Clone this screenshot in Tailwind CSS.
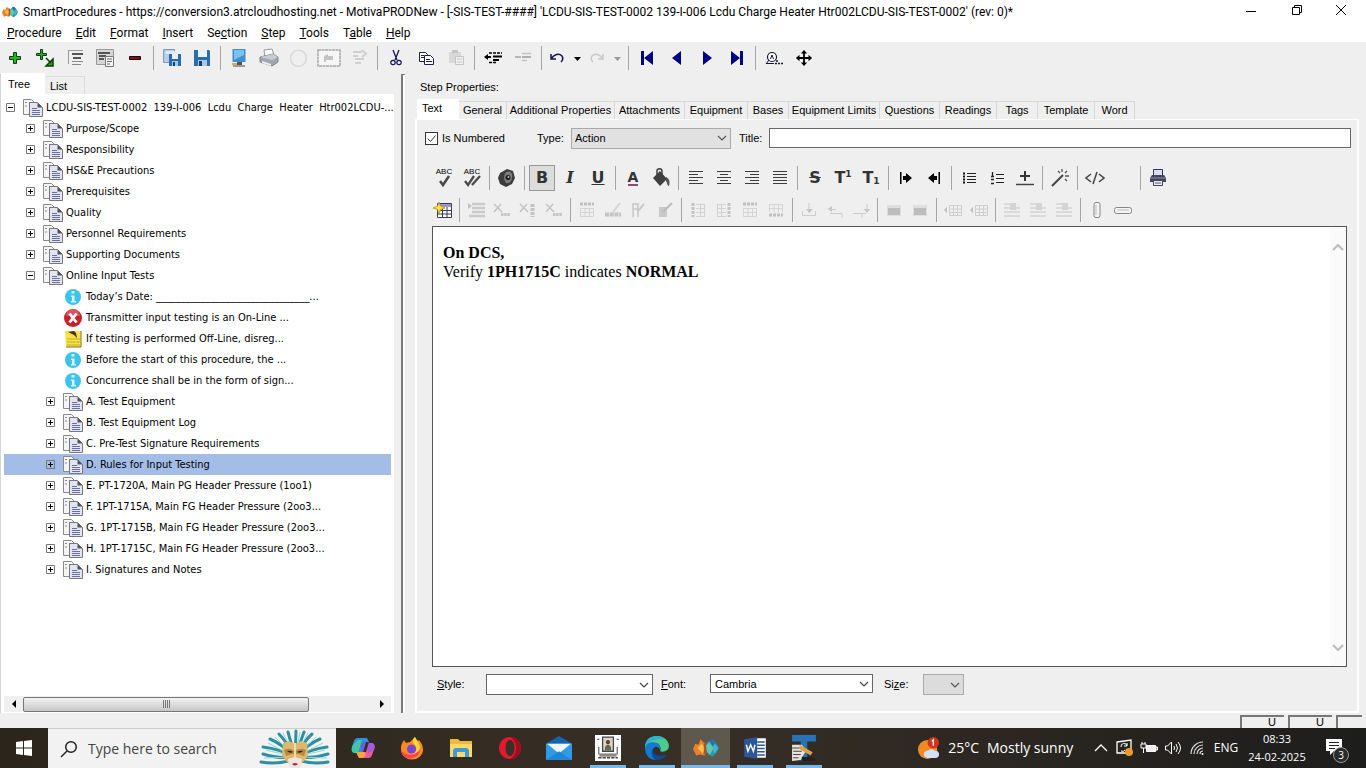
<!DOCTYPE html>
<html lang="en">
<head>
<meta charset="utf-8">
<meta name="viewport" content="width=device-width, initial-scale=1">
<title>SmartProcedures</title>
<script src="https://cdn.jsdelivr.net/npm/@tailwindcss/browser@4"></script>
</head>
<body class="h-screen overflow-hidden flex flex-col bg-[#efefef] text-black font-['Liberation_Sans',Arial,sans-serif] text-[11px] leading-4">

<svg class="hidden" aria-hidden="true">
  <defs>
    <symbol id="logo" viewBox="0 0 24 24"><path d="M0 13l2-5 3 1 2-5 4 4 2 5-2 6-5-1-3 1z" fill="#ee7f2b"/><path d="M4 12l4-4 3 4-2 5z" fill="#fbc04a"/><path d="M10 6l3 2v9l-3 1z" fill="#a9542e"/><path d="M24 12l-3-5-3-3-5 3-1 5 2 6 4 2 4-4z" fill="#259cae"/><path d="M12 10l3-3 4 5-3 6-3-2z" fill="#62c7ae"/><path d="M15 5l3-1 3 4-3 2z" fill="#2b6fa8"/><path d="M20 8l3 4-3 5-2-4z" fill="#49b4d0"/></symbol>
    <symbol id="plus" viewBox="0 0 20 20"><path d="M8.500 4.500h3v4h4v3h-4v4h-3v-4h-4v-3h4z" fill="#28b428" stroke="#0a3d0a"/></symbol>
    <symbol id="plusarrow" viewBox="0 0 20 20"><path d="M5.500 1.500h2v4h4v2h-4v4h-2v-4h-4v-2h4z" fill="#28b428" stroke="#0a3d0a"/><path d="M11 10l5 5M18 11v7h-7z" fill="#28a428" stroke="#0a3d0a" stroke-width="1.500"/></symbol>
    <symbol id="list1" viewBox="0 0 20 20"><path d="M3 2.500h15M3.500 2v14" fill="none" stroke="#9a9a9a"/><path d="M7 6h11M8 10h8" stroke="#555" stroke-width="2"/><path d="M7 13.500h11M7 16.500h9" stroke="#888"/></symbol>
    <symbol id="list2" viewBox="0 0 20 20"><path d="M1.500 1.500h17v15h-17z" fill="#d6d6d6" stroke="#999"/><path d="M3 5h12M4 8h7M4 11h5" stroke="#555" stroke-width="2"/><path d="M10.500 8.500h8v10h-8z" fill="#f4f4f4" stroke="#777"/><path d="M12 11h5M12 13.500h5M12 16h3" stroke="#666"/></symbol>
    <symbol id="minus" viewBox="0 0 20 20"><path d="M4.500 8.500h11v3h-11z" fill="#7a1020" stroke="#220008"/></symbol>
    <symbol id="save" viewBox="0 0 20 20"><path d="M2 2h15l1 1v15H2z" fill="#2a6cb0"/><path d="M6 2h9v7H6z" fill="#e8f1fa"/><path d="M6 12h9v6H6z" fill="#a9c8e6"/><path d="M7 13h3v5H7z" fill="#123f70"/></symbol>
    <symbol id="saveall" viewBox="0 0 20 20"><path d="M1.500 1.500h11v13h-11z" fill="#b9cdea" stroke="#7f98c4"/><path d="M4 3h10v3H4z" fill="#dfe9f8"/><path d="M7 6h12v12H7z" fill="#2a6cb0"/><path d="M10 6h6v5h-6z" fill="#e8f1fa"/><path d="M10 13h6v5h-6z" fill="#a9c8e6"/><path d="M11 14h2v4h-2z" fill="#123f70"/></symbol>
    <symbol id="monitor" viewBox="0 0 20 20"><path d="M3.500 1h13v13h-13z" fill="#3f8fd0"/><path d="M5 2h10v5L5 12z" fill="#7cc0f0"/><path d="M8 14h5v3H8z" fill="#555"/><path d="M4 17h12v2H4z" fill="#999"/><path d="M3 15h5v2H3z" fill="#d8a860"/></symbol>
    <symbol id="printer" viewBox="0 0 20 20"><path d="M5 2l8-1 2 6-9 2z" fill="#fff" stroke="#999"/><path d="M1 9l13-3 5 3v5l-6 4L1 14z" fill="#a3a8b0" stroke="#7c818a"/><path d="M1 9l13-3 5 3-6 3z" fill="#c9cdd3"/><path d="M3 13l9 3v2l-9-3z" fill="#e8f0ff"/></symbol>
    <symbol id="disc" viewBox="0 0 20 20"><path d="M5 17A8 8 0 1 1 15 16A8 8 0 0 1 5 17" fill="none" stroke="#d8d8d8" stroke-width="1.500"/></symbol>
    <symbol id="rectdim" viewBox="0 0 24 20"><path d="M1 2h22v16H1z" fill="#f6f6f6" stroke="#a8a8a8" stroke-width="1.500" stroke-dasharray="3 .5"/><path d="M7 8l4-2v2h5v4H9v2H7z" fill="#c4c4c4"/></symbol>
    <symbol id="sortdim" viewBox="0 0 20 20"><path d="M4 4h9M4 8h5M6 11h9M6 15h6M13 2l4 4-4 3" fill="none" stroke="#d0d0d0" stroke-width="2"/></symbol>
    <symbol id="cut" viewBox="0 0 20 20"><path d="M7 2l4 10M13 2L9 12" stroke="#15155e" stroke-width="1.300"/><circle cx="7" cy="14.500" r="2.200" fill="none" stroke="#15155e" stroke-width="1.200"/><circle cx="13" cy="14.500" r="2.200" fill="none" stroke="#15155e" stroke-width="1.200"/></symbol>
    <symbol id="copy" viewBox="0 0 20 20"><path d="M3.500 4.500h6l2 2v7h-8z" fill="#fff" stroke="#20204e"/><path d="M8.500 7.500h6l3 3v6h-9z" fill="#fff" stroke="#20204e"/><path d="M5 7.500h3M5 9.500h3M10 11.500h4M10 13.500h6" stroke="#20204e"/></symbol>
    <symbol id="paste" viewBox="0 0 20 20"><path d="M3 4h12v11H3z" fill="#d8d8d8"/><path d="M6 2h6v3H6z" fill="#c4c4c4"/><path d="M9.500 8.500h8v8h-8z" fill="#efefef" stroke="#c4c4c4"/><path d="M11 11h5M11 14h5" stroke="#c8c8c8"/></symbol>
    <symbol id="outdent" viewBox="0 0 20 20"><path d="M2 9h6" stroke="#000" stroke-width="2"/><path d="M1 9l4-3v6z"/><path d="M6 5h13M6 14.500h7" stroke="#000" stroke-width="1.500" stroke-dasharray="3 1"/><path d="M10 8.500h9M10 12h6" stroke="#000" stroke-width="2"/></symbol>
    <symbol id="indent" viewBox="0 0 20 20"><path d="M2 9h6" stroke="#b8b8b8" stroke-width="2"/><path d="M9 5.500h9M9 12.500h5" stroke="#c4c4c4" stroke-width="1.500"/><path d="M9 9h9" stroke="#b0b0b0" stroke-width="2"/></symbol>
    <symbol id="undo" viewBox="0 0 20 20"><path d="M4 6v5h5M4 11c3-5 8-6 11-3c2 3 0 5-1 6" fill="none" stroke="currentColor" stroke-width="1.500"/></symbol>
    <symbol id="redo" viewBox="0 0 20 20"><path d="M16 6v5h-5M16 11c-3-5-8-6-11-3c-2 3 0 5 1 6" fill="none" stroke="currentColor" stroke-width="1.500"/></symbol>
    <symbol id="caret" viewBox="0 0 10 20"><path d="M2 9h7l-3.500 4z" fill="currentColor"/></symbol>
    <symbol id="first" viewBox="0 0 20 20"><path d="M4 3h3v14H4zM16 3v14L7 10z" fill="#000084"/></symbol>
    <symbol id="prev" viewBox="0 0 20 20"><path d="M14 3v14L5 10z" fill="#000084"/></symbol>
    <symbol id="next" viewBox="0 0 20 20"><path d="M6 3v14l9-7z" fill="#000084"/></symbol>
    <symbol id="last" viewBox="0 0 20 20"><path d="M13 3h3v14h-3zM4 3v14l9-7z" fill="#000084"/></symbol>
    <symbol id="find" viewBox="0 0 20 20"><circle cx="8" cy="9" r="4.500" fill="#fff" stroke="#15153c" stroke-width="1.200"/><path d="M6.500 11l1.500-4 1.500 4M5 12l-3 4M2 15.500h8" fill="none" stroke="#15153c"/><path d="M12 13h2M11 15.500h8" stroke="#15153c" stroke-width="1.300" stroke-dasharray="2 1"/></symbol>
    <symbol id="move" viewBox="0 0 20 20"><path d="M10 1l3.500 4H11v4h4V6.500l4 3.500-4 3.500V11h-4v4h2.500L10 19l-3.500-4H9v-4H5v2.500L1 10l4-3.500V9h4V5H6.500z" fill="#000"/></symbol>
    <symbol id="docs" viewBox="0 0 20 20"><path d="M.5 1.500h8l3 3v12H.5z" fill="#f4f4f5" stroke="#8a8a8a"/><path d="M2 4.500h2M6 4.500h2M2 8h2" stroke="#8a8a9a"/><path d="M6.500 4.500h8l5 5v9h-13z" fill="#e2e4f4" stroke="#777"/><path d="M14.500 4.500v5h5z" fill="#555"/><path d="M9 10.500h5M9 12.500h8M9 14.500h8M9 16.500h8" stroke="#6b709a"/></symbol>
    <symbol id="info" viewBox="0 0 20 20"><circle cx="10" cy="10" r="8" fill="#3cc3ec"/><path d="M8.500 4h3v2.500h-3zM8 8.500h3.500V14H13v1.500H8V14h1v-4H8z" fill="#d8f4fd"/></symbol>
    <symbol id="stop" viewBox="0 0 20 20"><circle cx="10" cy="10" r="9" fill="#c71f2d"/><path d="M3 8a7 7 0 0 1 14 0z" fill="#d9545f"/><path d="M6.500 5.500l7 9M13.500 5.500l-7 9" stroke="#fff" stroke-width="2.800"/></symbol>
    <symbol id="note" viewBox="0 0 20 20"><path d="M2 2h16v16H3z" fill="#f7e04a"/><path d="M4 10h13M4 13h13M4 16h13" stroke="#c9ac28"/><path d="M5 3l6-1 2 2 1 5-3-3z" fill="#4a3410"/><path d="M18 2v16H3" fill="none" stroke="#8a7418"/></symbol>
    <symbol id="abc1" viewBox="0 0 20 20"><path d="M6 13l3 4 6-9" fill="none" stroke="#4a4a4a" stroke-width="2.500"/></symbol>
    <symbol id="abc2" viewBox="0 0 20 20"><path d="M3 13l3 4 6-9M10 17l8-9" fill="none" stroke="#4a4a4a" stroke-width="2.300"/></symbol>
    <symbol id="speaker" viewBox="0 0 20 20"><path d="M3 5l7-4 6 2 2 7-3 6-6 3-6-3-2-6z" fill="#3c3c3c"/><path d="M9 4q7-2 6 6q-1 6-6 5q-4-5 0-11z" fill="#7c7c7c"/><circle cx="11" cy="9.500" r="2.500" fill="#1c1c1c"/><circle cx="11.500" cy="9" r="1" fill="#bbb"/></symbol>
    <symbol id="bucket" viewBox="0 0 20 20"><path d="M2 10l7-7 7 8-7 7z" fill="#3f3f3f"/><path d="M6 8V3c0-3 5-3 5 0v4" fill="none" stroke="#3f3f3f" stroke-width="1.500"/><path d="M15 9c4 2 4 5 3 9-2 0-2-4-3-5z" fill="#555"/></symbol>
    <symbol id="al" viewBox="0 0 20 20"><path d="M3 3.500h14M3 6.500h9M3 9.500h14M3 12.500h9M3 15.500h14" stroke="#3c3c3c"/></symbol>
    <symbol id="ac" viewBox="0 0 20 20"><path d="M3 3.500h14M6 6.500h8M3 9.500h14M6 12.500h8M3 15.500h14" stroke="#3c3c3c"/></symbol>
    <symbol id="ar" viewBox="0 0 20 20"><path d="M3 3.500h14M8 6.500h9M3 9.500h14M8 12.500h9M3 15.500h14" stroke="#3c3c3c"/></symbol>
    <symbol id="aj" viewBox="0 0 20 20"><path d="M3 3.500h14M3 6.500h14M3 9.500h14M3 12.500h14M3 15.500h14" stroke="#3c3c3c"/></symbol>
    <symbol id="tabr" viewBox="0 0 20 20"><path d="M4 4h1.500v12H4zM7 8h3V5l6 5-6 5v-3H7z" fill="#000"/></symbol>
    <symbol id="tabl" viewBox="0 0 20 20"><path d="M14.500 4H16v12h-1.500zM13 8h-3V5l-6 5 6 5v-3h3z" fill="#000"/></symbol>
    <symbol id="ul" viewBox="0 0 20 20"><path d="M4 5.500h2M4 8.500h2M4 11.500h2M4 14.500h2" stroke="#111" stroke-width="2"/><path d="M8 5.500h9M8 8.500h9M8 11.500h9M8 14.500h9" stroke="#222"/></symbol>
    <symbol id="ol" viewBox="0 0 20 20"><path d="M5.500 4v4M4 8.500h3M4 11.500h3M4 15.500h3" stroke="#222" stroke-width="1.300"/><path d="M9 6.500h8M9 10.500h8M9 14.500h8" stroke="#222"/></symbol>
    <symbol id="hr" viewBox="0 0 20 20"><path d="M10 3v10M5 8h10" stroke="#333" stroke-width="2"/><path d="M1 16.500h18" stroke="#444" stroke-width="1.500"/></symbol>
    <symbol id="wand" viewBox="0 0 20 20"><path d="M2 18L13 7" stroke="#444" stroke-width="2"/><path d="M12 1v3M17 3l-2 2M19 8h-4M17 13l-2-2M8 3l2 2" stroke="#555" stroke-width="1.300"/></symbol>
    <symbol id="code" viewBox="0 0 20 20"><path d="M6 6l-5 4 5 4M14 6l5 4-5 4M12 4L8 16" fill="none" stroke="#444" stroke-width="1.500"/></symbol>
    <symbol id="printdark" viewBox="0 0 20 20"><path d="M5.500 1.500h9v6h-9z" fill="#dcdcf0" stroke="#33335c"/><path d="M4 7h12l2 3v4H2v-4z" fill="#45455c"/><path d="M2 10h16" stroke="#9090a8"/><path d="M5.500 12.500h9v5h-9z" fill="#eee" stroke="#44445c"/><path d="M7 15h6" stroke="#555"/></symbol>
    <symbol id="tablenew" viewBox="0 0 20 20"><path d="M4.500 3.500h14v14h-14z" fill="#fff" stroke="#3a3a5a"/><path d="M5 4h13v3H5z" fill="#9c94cc"/><path d="M5 10.500h13M5 14h13M9.500 7v10M14 7v10" stroke="#3a3a5a"/><path d="M6 2l1.500 4L12 8l-4.500 1.500L6 14l-1.500-4.500L0 8l4.500-2z" fill="#ffdf3c" stroke="#b08a10" stroke-width=".7"/></symbol>
    <symbol id="trow" viewBox="0 0 20 20"><path d="M2 3l4 3-4 3z" fill="#c4c4c4"/><path d="M6 4h13M6 8h13M6 12h13M3 16h16" stroke="#cacaca" stroke-width="2.500"/></symbol>
    <symbol id="tx" viewBox="0 0 20 20"><path d="M2 4l8 8M9 4l-7 8" stroke="#c4c4c4" stroke-width="1.500"/><path d="M9 14.500h9" stroke="#c4c4c4" stroke-width="3" stroke-dasharray="2.500 .7"/></symbol>
    <symbol id="txc" viewBox="0 0 20 20"><path d="M2 4l8 8M9 4l-7 8" stroke="#c4c4c4" stroke-width="1.500"/><path d="M14.500 4v13" stroke="#c4c4c4" stroke-width="4" stroke-dasharray="3 1"/></symbol>
    <symbol id="tgrid" viewBox="0 0 20 20"><path d="M3 4h14" stroke="#c0c0c0" stroke-width="3" stroke-dasharray="3 1"/><path d="M3.500 8.500h13v8h-13zM3 12.500h14M8 8v8M12.500 8v8" fill="none" stroke="#d4d4d4"/></symbol>
    <symbol id="tpen" viewBox="0 0 20 20"><path d="M2 14.500h16" stroke="#c4c4c4" stroke-width="4" stroke-dasharray="4 .7"/><path d="M10 12l7-9" stroke="#d4d4d4" stroke-width="2"/></symbol>
    <symbol id="tcolpen" viewBox="0 0 20 20"><path d="M4 3v14M9 3v14M4 4h5M4 9h5" stroke="#c8c8c8" stroke-width="1.500"/><path d="M9 11l6-7" stroke="#c8c8c8" stroke-width="2"/></symbol>
    <symbol id="tcell" viewBox="0 0 20 20"><path d="M4 7h8v10H4z" fill="#c9c9c9"/><path d="M8 12l9-9" stroke="#bcbcbc" stroke-width="2"/></symbol>
    <symbol id="tleft" viewBox="0 0 20 20"><path d="M5 3v14" stroke="#c4c4c4" stroke-width="3" stroke-dasharray="3 1"/><path d="M8 4.500h9M8 8.500h9M8 12.500h9M8 16.500h9M12.500 4v13M16.500 4v13" fill="none" stroke="#d2d2d2"/></symbol>
    <symbol id="tright" viewBox="0 0 20 20"><path d="M15 3v14" stroke="#c4c4c4" stroke-width="3" stroke-dasharray="3 1"/><path d="M3 4.500h9M3 8.500h9M3 12.500h9M3 16.500h9M3.500 4v13M7.500 4v13" fill="none" stroke="#d2d2d2"/></symbol>
    <symbol id="tbot" viewBox="0 0 20 20"><path d="M3 15h14" stroke="#c0c0c0" stroke-width="3" stroke-dasharray="3 1"/><path d="M3 4.500h14M3 8.500h14M3.500 4v8M8 4v8M12.500 4v8M16.500 4v8" fill="none" stroke="#d4d4d4"/></symbol>
    <symbol id="msplit" viewBox="0 0 20 20"><path d="M10 3v10M3 15.500h14M3.500 11v4M16.500 11v4" fill="none" stroke="#ccc"/><path d="M7 9h7l-3.500 4z" fill="#c4c4c4"/></symbol>
    <symbol id="mleft" viewBox="0 0 20 20"><path d="M7 6v6L3 9z" fill="#c4c4c4"/><path d="M3 9.500h8M5 13.500h12v4" fill="none" stroke="#ccc"/></symbol>
    <symbol id="mright" viewBox="0 0 20 20"><path d="M13 9h6l-3 4z" fill="#c4c4c4"/><path d="M2 13.500h9v4M11 13.500h4M16 4v6" fill="none" stroke="#ccc"/></symbol>
    <symbol id="mrect" viewBox="0 0 20 20"><path d="M3 5h14v11H3z" fill="#dedede"/><path d="M4 8h12v7H4z" fill="#bdbdbd"/></symbol>
    <symbol id="mcols" viewBox="0 0 20 20"><path d="M1 10l3-3v6z" fill="#bdbdbd"/><path d="M6.500 5.500h12v10h-12zM6 9h12M6 12.500h12M10.500 5v11M14.500 5v11" fill="none" stroke="#cecece"/></symbol>
    <symbol id="talign" viewBox="0 0 20 20"><path d="M2 4h8M2 8h16M2 12h16M2 16h16" stroke="#d4d4d4" stroke-width="1.500"/><path d="M8 3h6v7H8z" fill="#d4d4d4"/></symbol>
    <symbol id="vbox" viewBox="0 0 20 20"><rect x="7" y="2.500" width="6" height="15" rx="2" fill="#f4f4f4" stroke="#858585"/><path d="M9 5v10" stroke="#bbb"/></symbol>
    <symbol id="hbox" viewBox="0 0 20 20"><rect x="1.500" y="7.500" width="17" height="6" rx="2" fill="#f4f4f4" stroke="#858585"/><path d="M4 10h12" stroke="#bbb"/></symbol>
    <symbol id="chev" viewBox="0 0 10 10"><path d="M1 3l4 4 4-4" fill="none" stroke="currentColor" stroke-width="1.200"/></symbol>
    <symbol id="chevbold" viewBox="0 0 12 12"><path d="M1 3l5 5 5-5" fill="none" stroke="currentColor" stroke-width="2.200"/></symbol>
  </defs>
</svg>

<header class="bg-white font-[Roboto,sans-serif] text-xs">
  <div class="flex h-6 items-center pl-0.5">
    <svg class="mr-[5px] size-4"><use href="#logo"/></svg>
    <h1 class="flex-1 truncate">SmartProcedures - https://conversion3.atrcloudhosting.net - MotivaPRODNew - [-SIS-TEST-####] 'LCDU-SIS-TEST-0002 139-I-006 Lcdu Charge Heater Htr002LCDU-SIS-TEST-0002' (rev: 0)*</h1>
    <button aria-label="Minimize" class="flex h-6 w-[46px] items-center justify-center"><svg class="size-3" viewBox="0 0 12 12"><path d="M1 5.500h10" stroke="#000"/></svg></button>
    <button aria-label="Restore" class="flex h-6 w-[46px] items-center justify-center pb-1"><svg class="size-3" viewBox="0 0 12 12"><path d="M1.500 3.500h7v7h-7zM3.500 3.500v-2h7v7h-2" fill="none" stroke="#000"/></svg></button>
    <button aria-label="Close" class="flex h-6 w-[46px] items-center justify-center pr-1 pb-1"><svg class="size-3" viewBox="0 0 12 12"><path d="M1 1l10 10M11 1L1 11" stroke="#000"/></svg></button>
  </div>
  <nav class="flex h-[18px] items-center gap-3.5 pl-[7px]">
    <button><u>P</u>rocedure</button><button><u>E</u>dit</button><button><u>F</u>ormat</button><button><u>I</u>nsert</button><button>Se<u>c</u>tion</button><button><u>S</u>tep</button><button><u>T</u>ools</button><button>T<u>a</u>ble</button><button><u>H</u>elp</button>
  </nav>
</header>

<div class="flex h-8 shrink-0 items-center" role="toolbar" aria-label="Procedure" id="main-toolbar"></div>

<main class="flex min-h-0 flex-1">
  <section class="flex w-[394px] shrink-0 flex-col border-l border-[#d5d5d5]">
    <div class="flex h-[21px] shrink-0 items-end border-b border-white" role="tablist">
      <button role="tab" aria-selected="true" class="h-[21px] w-11 bg-white pr-2">Tree</button>
      <button role="tab" class="h-[18px] w-10 border-t border-r border-[#dcdcdc] pr-3">List</button>
    </div>
    <div class="flex min-h-0 flex-1 flex-col bg-white px-[3px] pb-px">
      <ul class="flex-1 pt-0.5 font-['DejaVu_Sans_Condensed','DejaVu_Sans',sans-serif]" role="tree" id="tree"></ul>
      <div class="flex h-4 items-center bg-[#f0f0f0]">
        <button aria-label="Scroll left" class="flex w-[19px] justify-center"><svg class="h-2 w-1.5" viewBox="0 0 6 8"><path d="M5 0v8L1 4z"/></svg></button>
        <div class="flex-1"><div class="flex h-[15px] w-[82%] items-center justify-center gap-px rounded-xs border border-[#777] bg-linear-to-b from-[#f2f2f2] to-[#c6c6c6]"><i class="h-2 w-px bg-[#777]"></i><i class="h-2 w-px bg-[#777]"></i><i class="h-2 w-px bg-[#777]"></i><i class="h-2 w-px bg-[#777]"></i></div></div>
        <button aria-label="Scroll right" class="flex w-[19px] justify-center"><svg class="h-2 w-1.5" viewBox="0 0 6 8"><path d="M1 0v8l4-4z"/></svg></button>
      </div>
    </div>
  </section>
  <div class="mr-2.5 ml-[7px] w-1 shrink-0 border-t border-l-2 border-[#7a7a7a] bg-[#fafafa]"></div>

  <section class="mr-[7px] flex min-w-0 flex-1 flex-col">
    <h2 class="h-[25px] shrink-0 pt-[5px] pl-[5px]">Step Properties:</h2>
    <div class="flex h-5 shrink-0 items-end pl-0.5" role="tablist" id="tabs"></div>
    <div class="flex min-h-0 flex-1 flex-col border-2 border-t border-white">
      <div class="flex h-9 shrink-0 items-center pl-2 pr-1.5">
        <label class="flex w-28 items-center gap-1"><input type="checkbox" checked class="size-[13px] appearance-none border border-[#333] bg-white bg-no-repeat checked:bg-[url('data:image/svg+xml,%3Csvg%20xmlns=%22http://www.w3.org/2000/svg%22%20viewBox=%220%200%2011%2011%22%3E%3Cpath%20d=%22M1.500%205.500l3%203%205-6%22%20fill=%22none%22%20stroke=%22%23333%22/%3E%3C/svg%3E')]">Is Numbered</label>
        <label for="type" class="w-[34px]">Type:</label>
        <div class="grid w-40"><select id="type" class="col-start-1 row-start-1 h-[21px] appearance-none border border-[#aaa] bg-[#e1e1e1] pl-[3px]"><option>Action</option></select><svg class="pointer-events-none col-start-1 row-start-1 mr-1 size-2.5 self-center justify-self-end text-[#555]"><use href="#chev"/></svg></div>
        <label for="title" class="ml-2 w-[30px]">Title:</label>
        <input id="title" type="text" class="h-5 min-w-0 flex-1 border border-[#666] bg-white px-1">
      </div>
      <div class="mt-1.5 flex h-8 shrink-0 items-center pl-[13px]" role="toolbar" aria-label="Text format" id="fmt1"></div>
      <div class="flex h-8 shrink-0 items-center pl-[13px]" role="toolbar" aria-label="Table format" id="fmt2"></div>
      <div class="mr-2.5 ml-[15px] flex min-h-0 flex-1 border border-[#555] bg-white">
        <div role="textbox" aria-multiline="true" aria-label="Step text" contenteditable="true" class="flex-1 px-2.5 pt-4 font-['Liberation_Serif',serif] text-base leading-[19px]"><p><b>On DCS,</b></p><p>Verify <b>1PH1715C</b> indicates <b>NORMAL</b></p></div>
        <div class="flex w-4 flex-col items-center justify-between bg-[#fafafa] pt-3.5 pb-3 text-[#bdbdbd]">
          <button aria-label="Scroll up"><svg class="size-3 rotate-180"><use href="#chevbold"/></svg></button>
          <button aria-label="Scroll down"><svg class="size-3"><use href="#chevbold"/></svg></button>
        </div>
      </div>
      <div class="flex h-11 shrink-0 items-start pt-[7px] pl-5">
        <label for="style" class="w-[49px] pt-0.5"><u>S</u>tyle:</label>
        <div class="grid w-[167px]"><select id="style" class="col-start-1 row-start-1 h-[21px] appearance-none border border-[#666] bg-white"><option></option></select><svg class="pointer-events-none col-start-1 row-start-1 mr-1 size-2.5 self-center justify-self-end text-[#444]"><use href="#chev"/></svg></div>
        <label for="font" class="ml-2 w-[49px] pt-0.5"><u>F</u>ont:</label>
        <div class="grid w-[163px]"><select id="font" class="col-start-1 row-start-1 h-[19px] appearance-none border border-[#666] bg-white pl-1"><option>Cambria</option></select><svg class="pointer-events-none col-start-1 row-start-1 mr-1 size-2.5 self-center justify-self-end text-[#444]"><use href="#chev"/></svg></div>
        <label for="size" class="ml-[11px] w-[39px] pt-0.5">Si<u>z</u>e:</label>
        <div class="grid w-[41px]"><select id="size" class="col-start-1 row-start-1 h-[21px] appearance-none border border-[#aaa] bg-[#dcdcdc]"><option></option></select><svg class="pointer-events-none col-start-1 row-start-1 mr-1 size-2.5 self-center justify-self-end text-[#555]"><use href="#chev"/></svg></div>
      </div>
    </div>
  </section>
</main>

<div class="flex h-[15px] shrink-0 items-end justify-end gap-1 pr-1 leading-[10px]">
  <span class="h-[13px] w-11 border-t-2 border-l-2 border-[#777] pl-[26px]">U</span>
  <span class="h-[13px] w-11 border-t-2 border-l-2 border-[#777] pl-[26px]">U</span>
  <span class="h-[13px] w-[26px] border-t-2 border-l-2 border-[#777]"></span>
</div>

<footer class="flex h-10 shrink-0 items-stretch bg-linear-to-r from-[#2b251b] via-[#382f26] to-[#1d1d1c] font-['Open_Sans',sans-serif] text-white">
  <button aria-label="Start" class="flex w-12 items-center justify-center"><svg class="size-4" viewBox="0 0 16 16"><path d="M0 2l7-1v6.500H0zM8 1l8-1v7.500H8zM0 8.500h7V15l-7-1zM8 8.500h8V16l-8-1z" fill="#fff"/></svg></button>
  <div class="flex w-72 items-center border-t border-[#ccc] bg-[#f2f2f2] pl-3">
    <svg class="mr-2.5 size-[18px]" viewBox="0 0 18 18"><circle cx="11" cy="7" r="5.300" fill="none" stroke="#222" stroke-width="1.500"/><path d="M7 11l-6 6" stroke="#222" stroke-width="1.500"/></svg>
    <input type="search" aria-label="Type here to search" placeholder="Type here to search" class="w-[170px] text-sm text-[#333] placeholder:text-[#444]">
    <svg class="h-10 w-[74px]" viewBox="0 0 74 40"><g fill="none" stroke="#2f8f9e" stroke-width="3" stroke-linecap="round"><path d="M37 30Q20 36 3 33M37 28Q20 30 5 25M37 28Q22 20 5 18M37 28Q24 15 12 10M37 28Q28 12 21 5M37 28L30 3M37 28L38 2M37 28L46 3M37 28Q46 12 54 5M37 28Q50 15 62 10M37 28Q54 20 69 18M37 28Q54 30 70 25M37 30Q54 36 70 33"/></g><g fill="none" stroke="#8fd8da"><path d="M37 28L6 29M37 28L8 21M37 28L10 14M37 28L17 8M37 28L25 4M37 28L42 3M37 28L50 4M37 28L58 8M37 28L65 14M37 28L67 21M37 28L69 29"/></g><path d="M25 14l6-2 6 3 6-3 6 2 1 12q-4 9-13 12q-9-3-13-12z" fill="#dcb771"/><path d="M26 21q5-3 11 1q6-4 11-1l-2 6-6-2h-6l-6 2z" fill="#b98a3c"/><path d="M29 22q3-1 6 1q-3 2-6-1M39 23q3-2 6-1q-3 3-6 1" fill="#2c2417"/><path d="M36 14h2v14h-2z" fill="#f3dba4"/><path d="M30 30l7-2 7 2-1 8-4 2h-4l-4-2z" fill="#efe6e2"/><path d="M34 35q3-2 6 0q-3 3-6 0" fill="#a2333c"/></svg>
  </div>
  <nav class="ml-0.5 flex" aria-label="Apps">
    <button aria-label="Copilot" class="flex w-[49px] items-center justify-center"><svg class="size-6" viewBox="0 0 24 24"><path d="M7 2h9l3 6h-6l-3 9H4C0 17 0 12 2 8c1-4 2-6 5-6z" fill="#2f8de4"/><path d="M2 9l5-5h4l-4 13H4c-4 0-4-4-2-8z" fill="#42c6a0"/><path d="M17 22H8l-3-6h6l3-9h6c5 0 4 5 2 9-1 4-2 6-5 6z" fill="#e85a9b"/><path d="M5 16h6l1-4 3 7-3 3H8z" fill="#f7a53c"/><path d="M15 7h5c4 0 4 4 3 7l-6 3z" fill="#a45be0"/><path d="M10 11l3-5h5l-3 10h-5z" fill="#382f26"/><path d="M10 11l3-5h2l-3 10h-2z" fill="#7c5be0"/></svg></button>
    <button aria-label="Firefox" class="flex w-[49px] items-center justify-center"><svg class="size-6" viewBox="0 0 24 24"><path d="M1 13C1 8 3 6 4 4l2 3 4-1 5-5c1 2 2 3 3 4l1-1c3 3 4 7 4 10a11 10 0 0 1-22-1z" fill="#ff8a1f"/><path d="M15 1c1 3 5 5 5 11 0 6-6 8-9 6 6 0 7-6 3-10-2-3-1-5 1-7z" fill="#ffd53a"/><circle cx="11.500" cy="13" r="4.500" fill="#7a43d8"/><path d="M1 13c2 5 8 7 13 5 3-1 5-3 6-5 0 12-19 13-19 0z" fill="#ff4055"/></svg></button>
    <button aria-label="File Explorer" class="flex w-[49px] items-center justify-center"><svg class="size-6" viewBox="0 0 24 24"><path d="M1 3h8l2 2h12v16H1z" fill="#f0b93a"/><path d="M1 8h22v13H1z" fill="#fbd96b"/><path d="M4 21v-7l2-2h12l2 2v7h-4v-5H8v5z" fill="#3f9bd8"/></svg></button>
    <button aria-label="Opera" class="flex w-[49px] items-center justify-center"><svg class="size-6" viewBox="0 0 24 24"><circle cx="12" cy="12" r="11" fill="#e3192d"/><path d="M12 1a11 11 0 0 1 0 22c8-4 8-18 0-22z" fill="#a30c1c"/><ellipse cx="12" cy="12" rx="4.500" ry="8" fill="#382f26"/></svg></button>
    <button aria-label="Mail" class="flex w-[49px] items-center justify-center"><svg class="size-[26px]" viewBox="0 0 24 24"><path d="M0 8l12-7 12 7v15H0z" fill="#1664b0"/><path d="M0 8h24v15H0z" fill="#2e9be8"/><path d="M1 8h22l-11 9z" fill="#eef6fc"/><path d="M0 23l12-8 12 8z" fill="#2286d4"/></svg></button>
    <button aria-label="Gallery" class="flex w-[49px] flex-col items-center justify-end gap-1"><svg class="size-[26px]" viewBox="0 0 24 24"><path d="M0 0h24v24H0z" fill="#fff"/><path d="M7 2h10v13H7z" fill="#ddd3c5" stroke="#444" stroke-width="1.200"/><circle cx="12" cy="6.500" r="2" fill="#5c4534"/><path d="M9 14q0-5 3-5t3 5z" fill="#665"/><path d="M4 17h16v3H4z" fill="#8d877f"/><path d="M3 21h18" stroke="#444" stroke-width="1.500" stroke-dasharray="3 1"/><path d="M3.500 11v7M20.500 11v7" stroke="#555"/><path d="M2 4h2M20 4h2" stroke="#3570c0"/></svg><i class="h-[3px] w-9 bg-[#76b9ed]"></i></button>
    <button aria-label="Edge" class="flex w-[49px] flex-col items-center justify-end gap-1"><svg class="size-[26px]" viewBox="0 0 24 24"><path d="M1 12C1 4 6 1 12 1c7 0 11 5 11 9 0 5-5 6-8 5 1-4-1-7-5-7-5 0-8 3-9 4z" fill="#4ccb8c"/><path d="M1 12C1 4 6 1 12 1c3 0 5 1 7 3C12 3 5 5 1 12z" fill="#2bb3d4"/><path d="M1 12c1-4 5-6 9-5 4 0 6 4 5 7-1-2-3-4-5-3-4 3-1 10 4 11-7 3-13-2-13-10z" fill="#1479d0"/><path d="M10 11c-4 3 0 11 11 7-2 4-6 5-9 5-5-1-7-9-2-12z" fill="#0c4a94"/></svg><i class="h-[3px] w-9 bg-[#76b9ed]"></i></button>
    <button aria-label="SmartProcedures" class="flex w-[49px] flex-col items-center justify-end gap-1 bg-[#5e594c]"><svg class="size-[26px]"><use href="#logo"/></svg><i class="h-[3px] w-full bg-[#76b9ed]"></i></button>
    <button aria-label="Word" class="flex w-[49px] flex-col items-center justify-end gap-1"><svg class="size-[26px]" viewBox="0 0 24 24"><path d="M12 3h10v18H12z" fill="#fff"/><path d="M14 6.500h7M14 9.500h7M14 12.500h7M14 15.500h7M14 18.500h7" stroke="#2b579a" stroke-width="1.300"/><path d="M2 4l12-2v20L2 20z" fill="#2b579a"/><path d="M4 9l1.500 6 2.500-6 2.500 6L12 9" fill="none" stroke="#fff" stroke-width="1.300"/></svg><i class="h-[3px] w-9 bg-[#76b9ed]"></i></button>
    <button aria-label="Text editor" class="flex w-[49px] flex-col items-center justify-end gap-1"><svg class="size-[26px]" viewBox="0 0 24 24"><path d="M1 0h22v6H15v18H9V6H1z" fill="#2673b8"/><path d="M1 9h9l4 5-5 9-8 1z" fill="#e8e4dc"/><path d="M1 12h7M2 15h8M2 18h7M2 21h5" stroke="#444"/><path d="M8 9l12 7-2 3-10-6z" fill="#e0a040"/><path d="M10 20l12 1v3H10z" fill="#222"/></svg><i class="h-[3px] w-9 bg-[#76b9ed]"></i></button>
  </nav>
  <div class="ml-auto flex items-center">
    <button class="flex items-center text-sm"><svg class="mr-2 size-[23px]" viewBox="0 0 24 24"><circle cx="11" cy="13" r="10" fill="#f08a24"/><path d="M12 22a5 4 0 0 1 0-8q3-3 6 0q5 0 5 4t-4 4z" fill="#d4e0f4"/><circle cx="17" cy="6" r="6" fill="#d23420"/><path d="M15.500 4.500L17 3v6" fill="none" stroke="#fff" stroke-width="1.300"/></svg><span class="mr-2">25°C</span><span class="w-[90px] whitespace-nowrap text-left">Mostly sunny</span></button>
    <button aria-label="Show hidden icons" class="ml-3 flex w-6 justify-center"><svg class="size-3.5" viewBox="0 0 14 14"><path d="M1 10l6-6 6 6" fill="none" stroke="#fff" stroke-width="1.300"/></svg></button>
    <button aria-label="Update" class="flex w-6 justify-center"><svg class="size-[18px]" viewBox="0 0 18 18"><path d="M1 3l14-2v13H1z" fill="none" stroke="#fff" stroke-width="1.300"/><path d="M5 8a3 3 0 0 1 6-1M11 4v3H8M5 12a3 3 0 0 0 4-1" fill="none" stroke="#fff"/><circle cx="13" cy="13" r="4" fill="#f0982a"/></svg></button>
    <button aria-label="Battery" class="flex w-6 justify-center"><svg class="size-[18px]" viewBox="0 0 18 18"><path d="M6.500 6.500h9v6h-9z" fill="#eee" stroke="#fff"/><path d="M16 8h1.500v3H16zM1 5h5v4H1zM2 3v2M5 3v2M3.500 9v5" fill="#2a2623" stroke="#fff"/></svg></button>
    <button aria-label="Volume" class="flex w-6 justify-center"><svg class="size-[18px]" viewBox="0 0 18 18"><path d="M1.500 7h2l4-4v12l-4-4h-2zM10 7q1 2 0 4M12 5q3 4 0 8M14 3q5 6 0 12" fill="none" stroke="#fff"/></svg></button>
    <button aria-label="Network" class="flex w-6 justify-center"><svg class="size-4" viewBox="0 0 16 16"><path d="M2 14A12 12 0 0 1 14 2M5 14a9 9 0 0 1 9-9M8 14a6 6 0 0 1 6-6M11 14a3 3 0 0 1 3-3" fill="none" stroke="#ddd" stroke-width="1.200"/><circle cx="13.500" cy="14" r="1" fill="#fff"/></svg></button>
    <button class="w-[34px] text-xs">ENG</button>
    <button class="w-[68px] text-center text-[11px] leading-[18px] whitespace-nowrap">08:33<br>24-02-2025</button>
    <button aria-label="3 notifications" class="relative ml-3.5 flex h-10 w-[41px] items-center pb-0.5"><svg class="size-[18px]" viewBox="0 0 18 18"><path d="M1 1h16v12H9l-4 4v-4H1z" fill="#fff"/><path d="M4 4.500h10M4 7.500h10M4 10.500h6" stroke="#222"/></svg><span class="absolute top-[19px] left-2 size-4 rounded-full border border-[#999] bg-[#2b2b2b] text-[10px] leading-[14px]">3</span></button>
  </div>
</footer>

<script>
const sep = '<span class="flex h-7 w-[7px] shrink-0 justify-center"><i class="h-6 w-px self-center bg-[#a5a5a5]"></i></span>';
const icon = (id, cls) => `<svg class="${cls || 'size-5'}"><use href="#${id}"/></svg>`;
const button = (width, label, body) => `<button aria-label="${label}" class="${width} flex h-7 shrink-0 items-center justify-center">${body}</button>`;

// Entries are icon ids; "|" is a separator.
const mainIds = 'plus plusarrow list1 list2 minus | saveall save | monitor printer disc rectdim sortdim | cut copy paste | outdent indent | undo redo | first prev next last | find move'.split(' ');
document.getElementById('main-toolbar').innerHTML = mainIds.map(id => {
  if (id === '|') return sep;
  if (id === 'undo') return button('w-6 text-[#15154e]', 'Undo', icon(id, 'size-5')) + button('w-4 text-black', 'Undo list', icon('caret', 'h-5 w-2.5'));
  if (id === 'redo') return button('w-6 text-[#c8c8c8]', 'Redo', icon(id, 'size-5')) + button('w-4 text-[#999]', 'Redo list', icon('caret', 'h-5 w-2.5'));
  return button('w-[30px]', id, icon(id, id === 'rectdim' ? 'h-5 w-6' : id === 'move' ? 'size-[18px]' : 'size-5'));
}).join('');

const glyphs = {
  abc1: '<span class="grid"><span class="col-start-1 row-start-1 self-start text-center text-[8px] leading-[8px]">ABC</span><svg class="col-start-1 row-start-1 size-5"><use href="#abc1"/></svg></span>',
  abc2: '<span class="grid"><span class="col-start-1 row-start-1 self-start text-center text-[8px] leading-[8px]">ABC</span><svg class="col-start-1 row-start-1 size-5"><use href="#abc2"/></svg></span>',
  B: '<b class="flex size-[26px] items-center justify-center border border-[#999] bg-[#dcdcdc] font-[family-name:DejaVu_Sans] text-base text-[#333]">B</b>',
  I: '<b class="font-[family-name:DejaVu_Serif] text-base text-[#333] italic">I</b>',
  U: '<b class="font-[family-name:DejaVu_Sans] text-base text-[#333] underline">U</b>',
  A: '<b class="border-b-2 border-[#8a4a7a] font-[family-name:DejaVu_Sans] text-sm leading-[14px] text-[#333]">A</b>',
  S: '<b class="font-[family-name:DejaVu_Sans] text-base text-[#333] line-through">S</b>',
  Tsup: '<b class="flex font-[family-name:DejaVu_Sans] text-base leading-4 text-[#333]">T<span class="text-[9px] leading-[9px]">1</span></b>',
  Tsub: '<b class="flex items-end font-[family-name:DejaVu_Sans] text-base leading-4 text-[#333]">T<span class="text-[9px] leading-[9px]">1</span></b>'
};
document.getElementById('fmt1').innerHTML = 'abc1 abc2 | speaker | B I U | A bucket | al ac ar aj | S Tsup Tsub | tabr tabl | ul ol hr | wand | code gap | printdark'.split(' ')
  .map(id => id === '|' ? sep : id === 'gap' ? '<span class="w-7"></span>' : button('w-7', id, glyphs[id] || icon(id))).join('');
document.getElementById('fmt2').innerHTML = 'tablenew | trow tx txc tx | tgrid tpen tcolpen tcell | tleft tright tgrid tbot | msplit mleft mright | mrect mrect | mcols mcols | talign talign talign | vbox hbox'.split(' ')
  .map(id => id === '|' ? sep : button('w-[26px]', id, icon(id))).join('');

const tabs = [['Text','w-[42px]'],['General','w-12'],['Additional Properties','w-[108px]'],['Attachments','w-[70px]'],['Equipment','w-[63px]'],['Bases','w-[41px]'],['Equipment Limits','w-[91px]'],['Questions','w-[60px]'],['Readings','w-[57px]'],['Tags','w-[41px]'],['Template','w-[57px]'],['Word','w-10']];
document.getElementById('tabs').innerHTML = tabs.map(([name, width], i) => i === 0
  ? `<button role="tab" aria-selected="true" class="${width} h-5 bg-white pr-3 pb-0.5">${name}</button>`
  : `<button role="tab" class="${width} h-[18px] whitespace-nowrap border-t border-r border-[#d8d8d8] pb-0.5">${name}</button>`).join('');

// [level, expander, icon, label]
const rows = [
  [0,'-','docs','LCDU-SIS-TEST-0002&nbsp; 139-I-006&nbsp; Lcdu&nbsp; Charge&nbsp; Heater&nbsp; Htr002LCDU-...'],
  [1,'+','docs','Purpose/Scope'],[1,'+','docs','Responsibility'],[1,'+','docs','HS&amp;E Precautions'],[1,'+','docs','Prerequisites'],[1,'+','docs','Quality'],[1,'+','docs','Personnel Requirements'],[1,'+','docs','Supporting Documents'],[1,'-','docs','Online Input Tests'],
  [2,'','info','Today’s Date: _______________________________...'],[2,'','stop','Transmitter input testing is an On-Line ...'],[2,'','note','If testing is performed Off-Line, disreg...'],[2,'','info','Before the start of this procedure, the ...'],[2,'','info','Concurrence shall be in the form of sign...'],
  [2,'+','docs','A. Test Equipment'],[2,'+','docs','B. Test Equipment Log'],[2,'+','docs','C. Pre-Test Signature Requirements'],[2,'+','docs','D. Rules for Input Testing'],[2,'+','docs','E. PT-1720A, Main PG Header Pressure (1oo1)'],[2,'+','docs','F. 1PT-1715A, Main FG Header Pressure (2oo3...'],[2,'+','docs','G. 1PT-1715B, Main FG Header Pressure (2oo3...'],[2,'+','docs','H. 1PT-1715C, Main FG Header Pressure (2oo3...'],[2,'+','docs','I. Signatures and Notes']
];
const indent = ['pl-0.5', 'pl-[22px]', 'pl-[42px]'];
document.getElementById('tree').innerHTML = rows.map(([level, mark, pic, text], i) => `
  <li role="treeitem" class="${indent[level]} ${i === 17 ? 'bg-[#a3bde6]' : ''} flex h-[21px] items-center whitespace-nowrap">
    ${mark ? `<button aria-label="Toggle" class="mr-2"><svg class="size-[9px]" viewBox="0 0 9 9"><path d="M.5 .5h8v8h-8z" fill="${i === 17 ? '#a3bde6' : '#fff'}" stroke="#777"/><path d="${mark === '+' ? 'M2 4.500h5M4.500 2v5' : 'M2 4.500h5'}" stroke="#000"/></svg></button>` : '<span class="w-[17px]"></span>'}
    <svg class="mr-[3px] size-5 shrink-0"><use href="#${pic}"/></svg><span>${text}</span>
  </li>`).join('');
</script>
</body>
</html>
